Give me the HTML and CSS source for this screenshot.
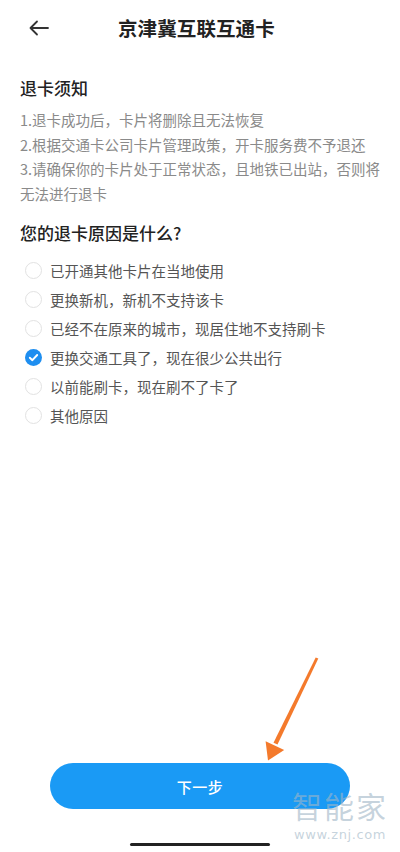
FILE: index.html
```html
<!DOCTYPE html>
<html lang="zh-CN">
<head>
<meta charset="utf-8">
<title>京津冀互联互通卡</title>
<link rel="stylesheet" href="styles.css">
</head>
<body>
<div class="page">
  <header class="topbar">
    <svg class="back" width="20" height="16" viewBox="0 0 20 16" aria-hidden="true">
      <path d="M1.5 8H19M8 1.5L1.5 8L8 14.5" fill="none" stroke="#333" stroke-width="1.8" stroke-linecap="round" stroke-linejoin="round"/>
    </svg>
    <h1 class="title">京津冀互联互通卡</h1>
  </header>

  <main class="content">
    <h2 class="heading">退卡须知</h2>
    <div class="notice">
      <p>1.退卡成功后，卡片将删除且无法恢复</p>
      <p>2.根据交通卡公司卡片管理政策，开卡服务费不予退还</p>
      <p>3.请确保你的卡片处于正常状态，且地铁已出站，否则将无法进行退卡</p>
    </div>

    <h2 class="heading reason">您的退卡原因是什么?</h2>
    <ul class="options">
      <li class="option"><span class="radio"></span><span>已开通其他卡片在当地使用</span></li>
      <li class="option"><span class="radio"></span><span>更换新机，新机不支持该卡</span></li>
      <li class="option"><span class="radio"></span><span>已经不在原来的城市，现居住地不支持刷卡</span></li>
      <li class="option">
        <svg class="radio-on" width="17" height="17" viewBox="0 0 17 17" aria-hidden="true">
          <circle cx="8.5" cy="8.5" r="8.5" fill="#1e8ef0"/>
          <path d="M4.8 8.7L7.4 11.2L12.2 6" fill="none" stroke="#fff" stroke-width="1.9" stroke-linecap="round" stroke-linejoin="round"/>
        </svg>
        <span>更换交通工具了，现在很少公共出行</span>
      </li>
      <li class="option"><span class="radio"></span><span>以前能刷卡，现在刷不了卡了</span></li>
      <li class="option"><span class="radio"></span><span>其他原因</span></li>
    </ul>
  </main>

  <footer class="footer">
    <button class="next">下一步</button>
    <div class="home-bar"></div>
  </footer>

  <div class="watermark">
    <span class="wm-big">智能家</span>
    <span class="wm-small">www.znj.com</span>
  </div>

  <svg class="annot" width="400" height="852" viewBox="0 0 400 852" aria-hidden="true">
    <polygon points="318.3,658.6 315.7,657.4 273.5,742.7 277.5,744.6" fill="#f47a2c"/>
    <polygon points="268,760.5 265.6,741.2 284.2,750.1" fill="#f47a2c"/>
  </svg>
</div>
</body>
</html>
```

FILE: styles.css
```css
* {
  box-sizing: border-box;
}

html, body {
  margin: 0;
  padding: 0;
  background: #ffffff;
}

body {
  font-family: "Noto Sans CJK SC", "Noto Sans", sans-serif;
  color: #222;
}

.page {
  position: relative;
  width: 400px;
  height: 852px;
  display: flex;
  flex-direction: column;
  overflow: hidden;
}

.topbar {
  height: 56px;
  display: flex;
  align-items: center;
  padding-left: 29px;
  gap: 69px;
}

.back {
  display: block;
  flex: none;
}

.title {
  margin: 0;
  font-size: 19.5px;
  font-weight: 700;
  color: #222;
  line-height: 24px;
  letter-spacing: 0.1px;
}

.content {
  padding: 0 12px 0 20px;
}

.heading {
  margin: 20px 0 0;
  font-size: 17px;
  font-weight: 500;
  line-height: 24px;
  color: #222;
}

.notice {
  margin-top: 8px;
}

.notice p {
  margin: 0;
  font-size: 14.5px;
  line-height: 24.6px;
  color: #8a8a8a;
}

.reason {
  margin-top: 15px;
}

.options {
  list-style: none;
  margin: 11px 0 0;
  padding: 0 0 0 5px;
}

.option {
  height: 29px;
  display: flex;
  align-items: center;
  gap: 8px;
  font-size: 14.5px;
  color: #555;
}

.radio {
  width: 17px;
  height: 17px;
  border-radius: 50%;
  border: 1px solid #e2e2e2;
  flex: none;
}

.radio-on {
  display: block;
  flex: none;
}

.footer {
  margin-top: auto;
  display: flex;
  flex-direction: column;
  align-items: center;
  padding-bottom: 6px;
}

.next {
  width: 300px;
  height: 46px;
  border: none;
  border-radius: 23px;
  background: #1a9af5;
  color: #fff;
  font-family: "Noto Sans CJK SC", "Noto Sans", sans-serif;
  font-size: 15px;
  font-weight: 500;
  letter-spacing: 0.5px;
}

.home-bar {
  margin-top: 34px;
  width: 140px;
  height: 3px;
  border-radius: 2px;
  background: #222;
}

.watermark {
  position: absolute;
  left: 290px;
  top: 790px;
  width: 100px;
  display: flex;
  flex-direction: column;
  align-items: center;
  gap: 8px;
  color: rgba(160, 182, 198, 0.6);
}

.wm-big {
  font-size: 30px;
  line-height: 30px;
  font-weight: 400;
  letter-spacing: 2px;
}

.wm-small {
  font-family: "DejaVu Sans", sans-serif;
  font-size: 13px;
  line-height: 14px;
  letter-spacing: 0.6px;
}

.annot {
  position: absolute;
  left: 0;
  top: 0;
  pointer-events: none;
}
```
